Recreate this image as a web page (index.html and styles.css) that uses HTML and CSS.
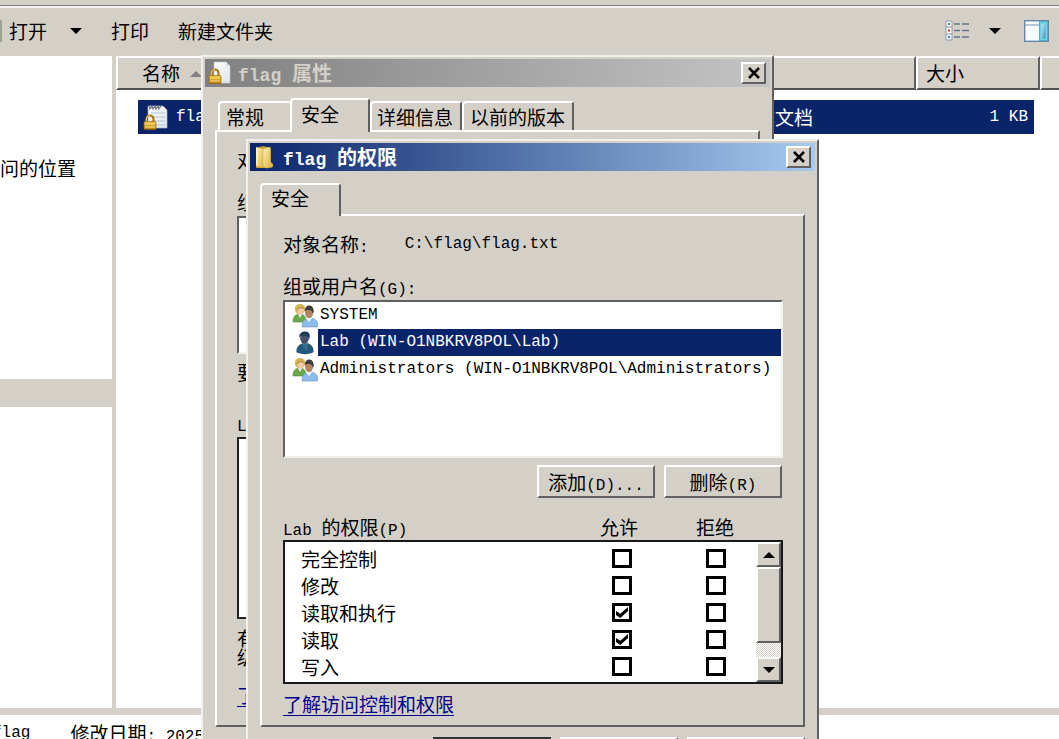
FILE: index.html
```html
<!DOCTYPE html>
<html lang="zh-CN">
<head>
<meta charset="utf-8">
<title>flag 的权限</title>
<link rel="stylesheet" href="styles.css">
</head>
<body>
<svg class="defs" aria-hidden="true">
  <defs>
    <linearGradient id="gold" x1="0" y1="0" x2="0" y2="1"><stop offset="0" stop-color="#f3c84b"/><stop offset="1" stop-color="#b87d08"/></linearGradient>
    <linearGradient id="paper" x1="0" y1="0" x2="1" y2="1"><stop offset="0" stop-color="#ffffff"/><stop offset="1" stop-color="#dfe3e8"/></linearGradient>
    <linearGradient id="fold" x1="0" y1="0" x2="1" y2="1"><stop offset="0" stop-color="#fff3b0"/><stop offset="1" stop-color="#dcb243"/></linearGradient>
    <linearGradient id="pane" x1="0" y1="0" x2="1" y2="1"><stop offset="0" stop-color="#c4e8f6"/><stop offset="1" stop-color="#3d8fc4"/></linearGradient>
    <symbol id="lock" viewBox="0 0 14 16">
      <path d="M3.5 8V5a3.5 3.5 0 0 1 7 0v3" fill="none" stroke="#a8770f" stroke-width="2.2"/>
      <path d="M3.2 8V5a3.6 3.6 0 0 1 3.6-3.4" fill="none" stroke="#eed27a" stroke-width="1"/>
      <rect x="1" y="7.5" width="12" height="8" rx="1" fill="url(#gold)" stroke="#8f6208" stroke-width=".6"/>
      <path d="M2 10h10M2 13h10" stroke="#ffe187" stroke-width="1"/>
    </symbol>
    <symbol id="users" viewBox="0 0 26 25">
      <path d="M1 19c0-6 3-8 7-8s6 3 6 8z" fill="#6aa84a" stroke="#4d8736" stroke-width=".6"/>
      <path d="M6 11l2 4 2-4z" fill="#f3f6e8"/>
      <circle cx="8" cy="6" r="5.2" fill="#d8b45a"/>
      <ellipse cx="8.6" cy="7.600" rx="3.1" ry="4" fill="#f0caa4"/>
      <path d="M4 7c1-4 7-5 9-1-3 0-4-1-5-1-1 1-2 2-4 2z" fill="#c39a3d"/>
      <path d="M10 24c0-6 3-9 8-9s8 3 8 8l-1 1z" fill="#8dbce8" stroke="#6796c6" stroke-width=".6"/>
      <path d="M14 15l3 4 3-4z" fill="#f5f8fc"/>
      <ellipse cx="17" cy="9.6" rx="4" ry="5.6" fill="#b58562"/>
      <path d="M12.800 8c0-7 9-8 9 1l-1 2c0-3-2-4-4-4-2 0-3 0-4 1z" fill="#3c3c3e"/>
    </symbol>
    <symbol id="user" viewBox="0 0 20 26">
      <path d="M1 23c0-6 3-8 6-9h6c4 1 6 4 6 9-4 3-14 3-18 0z" fill="#23597a"/>
      <path d="M7 14l4 9 3-9z" fill="#356f8d"/>
      <ellipse cx="9.5" cy="8.5" rx="4.4" ry="6" fill="#48506f"/>
      <path d="M4 8C3 0 16-1 15 7l-1 4c0-3-1-5-2-5-3 0-6-1-8 2z" fill="#20385c"/>
    </symbol>
  </defs>
</svg>

<main class="explorer">
  <div class="toolbar">
    <span class="app-edge"></span>
    <button class="tool">打开<i class="down"></i></button>
    <button class="tool">打印</button>
    <button class="tool">新建文件夹</button>
    <button class="tool view" aria-label="更改视图">
      <svg width="24" height="22" viewBox="0 0 24 22"><path d="M1 1h6v19H1z" fill="#f3f5f8" stroke="#8d9bad"/><path d="M1 7h6M1 14h6" stroke="#8d9bad"/><path d="M3 4h2" stroke="#439444" stroke-width="2"/><path d="M3 10.500h2" stroke="#e1251b" stroke-width="2"/><path d="M3 17h2" stroke="#377dc4" stroke-width="2"/><path d="M9 4h6m2 0h7M9 10.500h6m2 0h7M9 17h6m2 0h7" stroke="#63758d" stroke-width="1.500"/></svg>
      <i class="down"></i>
    </button>
    <button class="tool" aria-label="预览窗格">
      <svg width="25" height="22" viewBox="0 0 25 22"><rect x=".7" y=".7" width="23.600" height="20.600" fill="#fafbfc" stroke="#6585a8" stroke-width="1.400"/><path d="M1 5h14" stroke="#8fa9c4" stroke-width="1.300"/><rect x="15.500" y="1.500" width="8" height="19" fill="#67d6e8" stroke="#55aec9"/><rect x="17.500" y="4" width="4" height="14.500" fill="url(#pane)"/></svg>
    </button>
  </div>
  <div class="panes">
    <nav class="side">
      <div class="favorites"><a href="#recent">最近访问的位置</a></div>
      <div class="tree"></div>
    </nav>
    <section class="files">
      <table>
        <colgroup><col><col class="c-type"><col class="c-size"><col class="c-rest"></colgroup>
        <thead><tr><th>名称<i class="up"></i></th><th></th><th>大小</th><th></th></tr></thead>
        <tbody><tr>
          <td class="name"><div class="cell">
            <svg width="25" height="26" viewBox="0 0 25 26"><path d="M5 2h15l4 4v18H5z" fill="url(#paper)" stroke="#aab3bf" stroke-width=".7"/><path d="M6 2l1 3 2-3 1 3 2-3 1 3 2-3 1 3 2-3" fill="none" stroke="#6d7480" stroke-width="1.200"/><path d="M8 9h14M8 13h14M8 17h14M8 21h14" stroke="#a9c3dc"/><use href="#lock" x="0" y="10" width="14" height="16"/></svg>
            <span class="en">flag.txt</span></div></td>
          <td class="type">文本文档</td><td class="size en">1 KB</td><td class="rest"></td>
        </tr></tbody>
      </table>
    </section>
  </div>
  <footer class="status"><span class="en">flag</span><span>修改日期<span class="en">: 2025/</span></span></footer>
</main>

<section class="dialog properties" aria-label="flag 属性">
  <header class="title">
    <svg width="24" height="24" viewBox="0 0 24 24"><path d="M6 1h12l4 4v17H6z" fill="url(#paper)" stroke="#c6c6c6" stroke-width=".6"/><path d="M18 1v4h4" fill="#d7dbe0"/><use href="#lock" x="0" y="7" width="14" height="16"/></svg>
    <h2><span class="en">flag </span>属性</h2>
    <button class="close" aria-label="关闭"><svg width="14" height="12" viewBox="0 0 14 12"><path d="M2 1l10 10M12 1L2 11" stroke="#000" stroke-width="2.500"/></svg></button>
  </header>
  <div class="body">
    <div class="tabs"><button class="tab t1">常规</button><button class="tab active">安全</button><button class="tab t3">详细信息</button><button class="tab t4">以前的版本</button></div>
    <div class="panel">
      <p>对象名称<span class="en">:</span></p>
      <p class="group">组或用户名<span class="en">(G):</span></p>
      <div class="well back-users"></div>
      <p class="edit">要更改权限，请单击“编辑”。</p>
      <p class="back-label"><span class="en">Lab </span>的权限</p>
      <div class="back-perms"></div>
      <p class="advanced">有关特殊权限或高<br>级设置，请单击“高级”。</p>
      <a class="help" href="#help">了解访问控制和权限</a>
    </div>
  </div>
</section>

<section class="dialog permissions" aria-label="flag 的权限">
  <header class="title">
    <svg width="24" height="24" viewBox="0 0 24 24"><path d="M4 3l7-2 8 2v14l2 2v3l-6 1H4z" fill="#c99a2b"/><path d="M4 2l7 2v19l-7-2z" fill="url(#fold)"/><path d="M11 4l7-2v15l2 2v3l-6 1-3-2z" fill="url(#fold)" stroke="#d9b654" stroke-width=".6"/><path d="M5 4v16" stroke="#fffbe0"/></svg>
    <h2><span class="en">flag </span>的权限</h2>
    <button class="close" aria-label="关闭"><svg width="14" height="12" viewBox="0 0 14 12"><path d="M2 1l10 10M12 1L2 11" stroke="#000" stroke-width="2.500"/></svg></button>
  </header>
  <div class="body">
    <div class="tabs"><button class="tab active">安全</button></div>
    <div class="panel">
      <p class="object"><span>对象名称<span class="en">:</span></span><span class="en">C:\flag\flag.txt</span></p>
      <p class="group">组或用户名<span class="en">(G):</span></p>
      <ul class="well users">
        <li><svg width="26" height="25"><use href="#users"/></svg><span class="en">SYSTEM</span></li>
        <li class="selected"><svg width="26" height="25"><use href="#user"/></svg><span class="en">Lab (WIN-O1NBKRV8POL\Lab)</span></li>
        <li><svg width="26" height="25"><use href="#users"/></svg><span class="en">Administrators (WIN-O1NBKRV8POL\Administrators)</span></li>
      </ul>
      <div class="actions"><button class="btn">添加<span class="en">(D)...</span></button><button class="btn">删除<span class="en">(R)</span></button></div>
      <div class="perm-head"><span><span class="en">Lab </span>的权限<span class="en">(P)</span></span><span>允许</span><span>拒绝</span></div>
      <div class="perms">
        <table>
          <tr><th>完全控制</th><td><input type="checkbox" aria-label="允许完全控制"></td><td><input type="checkbox" aria-label="拒绝完全控制"></td></tr>
          <tr><th>修改</th><td><input type="checkbox" aria-label="允许修改"></td><td><input type="checkbox" aria-label="拒绝修改"></td></tr>
          <tr><th>读取和执行</th><td><input type="checkbox" checked aria-label="允许读取和执行"></td><td><input type="checkbox" aria-label="拒绝读取和执行"></td></tr>
          <tr><th>读取</th><td><input type="checkbox" checked aria-label="允许读取"></td><td><input type="checkbox" aria-label="拒绝读取"></td></tr>
          <tr><th>写入</th><td><input type="checkbox" aria-label="允许写入"></td><td><input type="checkbox" aria-label="拒绝写入"></td></tr>
        </table>
        <div class="scroll"><button aria-label="向上"><i class="up"></i></button><div class="thumb"></div><div class="track"></div><button aria-label="向下"><i class="down"></i></button></div>
      </div>
      <a class="help" href="#help">了解访问控制和权限</a>
    </div>
    <div class="confirm"><button class="btn default">确定</button><button class="btn">取消</button><button class="btn">应用</button></div>
  </div>
</section>
</body>
</html>
```

FILE: styles.css
```css
* { box-sizing: border-box; }
body {
  margin: 0;
  height: 100vh;
  position: relative;
  overflow: hidden;
  background: #d4d0c8;
  color: #000;
  font: 19px/24px "Noto Sans CJK SC", sans-serif;
}
.en { font-family: "Liberation Mono", monospace; font-size: 16px; line-height: 16px; white-space: pre; }
button { font: inherit; color: inherit; border: 0; padding: 0; background: none; }
p, h2, ul { margin: 0; padding: 0; }
svg { display: block; flex: none; }
.defs { position: absolute; width: 0; height: 0; }
.up, .down { display: inline-block; border: 6px solid transparent; }
.down { border-top-color: #000; border-bottom: 0; }
.up { border-bottom-color: #000; border-top: 0; }

/* Explorer */
.explorer { height: 100%; display: flex; flex-direction: column; }
.toolbar {
  flex: none;
  height: 51px;
  margin-top: 5px;
  border-top: 1px solid #808080;
  box-shadow: inset 0 2px #f4f2ee;
  display: flex;
  align-items: center;
  padding-right: 10px;
}
.app-edge { width: 2px; height: 22px; margin-right: 7px; background: #9aa58c; }
.tool { display: flex; align-items: center; gap: 23px; margin-right: 29px; }
.tool.view { margin: 0 23px 0 auto; gap: 20px; }
.tool:last-child { margin: 0; }
.panes { flex: 1; min-height: 0; display: flex; gap: 4px; }
.side { width: 112px; flex: none; display: flex; flex-direction: column; gap: 28px; }
.favorites { height: 323px; padding-top: 100px; background: #fff; overflow: hidden; }
.favorites a { display: block; margin-left: -57px; white-space: nowrap; color: #000; text-decoration: none; }
.tree { flex: 1; background: #fff; }
.files { flex: 1; background: #fff; }
.files table { width: 100%; border-collapse: separate; border-spacing: 0; table-layout: fixed; }
.c-type { width: 186px; }
.c-size { width: 124px; }
.c-rest { width: 19px; }
.files th {
  height: 34px;
  padding: 0 8px;
  text-align: left;
  font-weight: inherit;
  background: #d4d0c8;
  border: 2px solid;
  border-color: #fff #606060 #505050 #fff;
}
.files th:first-child { padding-left: 24px; }
.files th:last-child { border-right: 0; }
.files th .up { margin: 0 0 4px 10px; border-bottom-color: #808080; }
.files td { height: 44px; padding: 0; background: #0a246a; color: #fff; border-top: 10px solid #fff; }
.files .name { border-left: 22px solid #fff; }
.cell { display: flex; align-items: center; gap: 8px; padding-left: 5px; }
.files .type { padding-left: 7px; }
.files .size { text-align: right; padding-right: 6px; border-right: 6px solid #fff; }
.files .rest { background: #fff; }
.status { flex: none; height: 31px; border-top: 7px solid #d4d0c8; background: #fff; display: flex; gap: 40px; padding-top: 6px; white-space: nowrap; overflow: hidden; }
.status > .en { margin-left: -8px; line-height: 24px; }

/* Dialogs */
.dialog {
  position: absolute;
  width: 573px;
  padding: 2px;
  background: #d4d0c8;
  border: 2px solid;
  border-color: #f2f0ec #606060 #606060 #f2f0ec;
}
.properties { left: 201px; top: 55px; }
.permissions { left: 246px; top: 139px; }
.title { height: 28px; display: flex; align-items: center; gap: 6px; padding: 0 4px 0 3px; color: #fff; background: linear-gradient(90deg, #0a246a, #a6caf0); }
.permissions .title { gap: 7px; padding-left: 2px; }
.properties .title { color: #d4d0c8; background: linear-gradient(90deg, #808080, #c4c4c4); }
.title h2 { flex: 1; font-size: 20px; line-height: 24px; font-weight: 700; }
.title .en { font-size: 18px; }
.close, .btn, .scroll button, .thumb {
  background: #d4d0c8;
  border: 2px solid;
  border-color: #fff #606060 #606060 #fff;
}
.close { width: 25px; height: 22px; display: flex; align-items: center; justify-content: center; }
.body { padding: 12px 10px 10px; }
.tabs { display: flex; align-items: flex-end; }
.tab { height: 29px; text-align: left; line-height: 24px; padding-left: 6px; border: 2px solid; border-color: #fff #606060 transparent #fff; border-bottom: 0; border-radius: 4px 3px 0 0; }
.tab.active { width: 81px; height: 33px; padding-left: 9px; margin-bottom: -2px; padding-bottom: 5px; background: #d4d0c8; position: relative; }
.panel { border: 2px solid; border-color: #fff #606060 #606060 #fff; padding: 16px 20px 9px 21px; }
.group { margin-top: 18px; }
.well { margin-top: 2px; background: #fff; border: 2px solid; border-color: #606060 #f2f0ec #f2f0ec #606060; }
.help { display: table; color: #00008b; text-decoration: underline; text-underline-offset: 3px; }

.properties .body { padding-top: 11px; }
.properties .tabs { padding-left: 3px; }
.t1 { width: 72px; border-right: 0; }
.properties .tab.active { width: 80px; height: 34px; }
.t3 { width: 92px; padding-left: 5px; }
.t4 { width: 112px; }
.properties .panel { padding: 16px 20px 18px; }
.back-users { height: 138px; }
.edit { margin-top: 6px; }
.back-label { margin-top: 27px; }
.back-perms { height: 182px; margin-top: 2px; border: 2px solid #222; background: #fff; }
.advanced { margin-top: 9px; line-height: 19px; }
.properties .help { margin-top: 17px; }

.object { display: flex; gap: 36px; }
.object > .en { line-height: 24px; }
.users { height: 158px; list-style: none; }
.users li { height: 27px; display: flex; align-items: center; padding-left: 7px; }
.users li .en { flex: 1; line-height: 27px; padding-left: 2px; }
.users .selected .en { background: #0a246a; color: #fff; }
.actions { display: flex; justify-content: flex-end; gap: 9px; margin: 7px 1px 0 0; }
.btn { width: 118px; height: 33px; line-height: 24px; }
.perm-head { display: grid; grid-template-columns: 1fr 96px 96px; text-align: center; margin: 17px 20px 1px 0; }
.perm-head > :first-child { text-align: left; }
.perms { height: 144px; display: flex; background: #fff; border: 2px solid #181818; }
.perms table { flex: 1; margin-top: 3px; border-spacing: 0; table-layout: fixed; align-self: flex-start; }
.perms tr { height: 27px; }
.perms th { font-weight: inherit; text-align: left; padding: 0 0 0 16px; }
.perms td { width: 94px; padding: 0 0 0 26px; text-align: center; line-height: 0; }
.perms input { appearance: none; width: 20px; height: 19px; margin: 0; border: 3px solid #000; background: #fff; vertical-align: middle; display: inline-grid; place-items: center; }
.perms input:checked::before { content: ""; width: 12px; height: 11px; background: #000; clip-path: polygon(0 36%, 36% 62%, 100% 0, 100% 36%, 36% 100%, 0 72%); }
.scroll { width: 25px; margin-left: 6px; display: flex; flex-direction: column; }
.scroll button { height: 25px; display: flex; align-items: center; justify-content: center; }
.thumb { height: 76px; }
.track { flex: 1; background: repeating-conic-gradient(#d4d0c8 0 25%, #fff 0 50%) 0 0 / 2px 2px; }
.permissions .help { margin-top: 8px; }
.confirm { display: flex; justify-content: flex-end; gap: 9px; margin-top: 10px; }
.default { border-color: #333; }
```
